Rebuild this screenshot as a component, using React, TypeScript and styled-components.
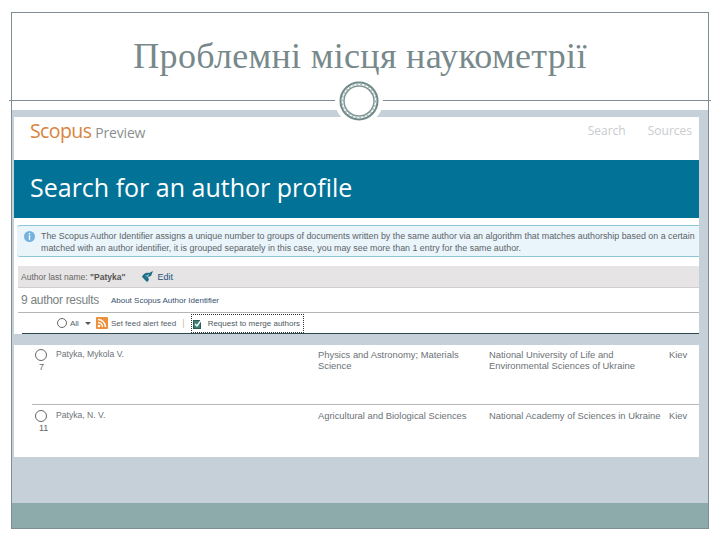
import styled, { createGlobalStyle } from 'styled-components';

const Global = createGlobalStyle`
  html, body { margin: 0; padding: 0; background: #ffffff; }
  body { width: 720px; height: 540px; overflow: hidden; font-family: "Liberation Sans", Arial, sans-serif; }
`;

const results = [
  {
    index: '7',
    name: 'Patyka, Mykola V.',
    subject: ['Physics and Astronomy; Materials', 'Science'],
    affiliation: ['National University of Life and', 'Environmental Sciences of Ukraine'],
    city: 'Kiev',
  },
  {
    index: '11',
    name: 'Patyka, N. V.',
    subject: ['Agricultural and Biological Sciences'],
    affiliation: ['National Academy of Sciences in Ukraine'],
    city: 'Kiev',
  },
];

function Ornament() {
  return (
    <svg width="48" height="48" viewBox="0 0 48 48" aria-hidden="true">
      <circle cx="24" cy="24" r="24" fill="#ffffff" />
      <circle cx="24" cy="24" r="18.5" fill="#ffffff" stroke="#6f8a88" strokeWidth="2" />
      <circle cx="24" cy="24" r="15" fill="#ffffff" stroke="#7f9794" strokeWidth="1.5" />
      <circle cx="24" cy="24" r="16.8" fill="none" stroke="#a9bcba" strokeWidth="1.5" strokeDasharray="2 2" />
    </svg>
  );
}

function InfoIcon() {
  return (
    <svg width="11" height="11" viewBox="0 0 11 11" aria-hidden="true">
      <circle cx="5.5" cy="5.5" r="5.5" fill="#74b4dc" />
      <rect x="4.8" y="2" width="1.4" height="1.4" fill="#ffffff" />
      <rect x="4.8" y="4.2" width="1.4" height="4.6" fill="#ffffff" />
    </svg>
  );
}

function EditIcon() {
  return (
    <svg width="12" height="11" viewBox="0 0 12 11" aria-hidden="true">
      <path d="M1 6c1-3 4-5 7-4l4-2-2 5-3 1 1 3-2 2C4 9 3 8 1 6z" fill="#1f6f86" />
      <path d="M4 5l4-2-1 3z" fill="#7cc0d2" />
    </svg>
  );
}

function RssIcon() {
  return (
    <svg width="12" height="12" viewBox="0 0 12 12" aria-hidden="true">
      <rect width="12" height="12" rx="1" fill="#ee8f3c" />
      <circle cx="3" cy="9" r="1.3" fill="#ffffff" />
      <path d="M2 5.5A4.5 4.5 0 0 1 6.5 10M2 2.5A7.5 7.5 0 0 1 9.5 10" fill="none" stroke="#ffffff" strokeWidth="1.4" />
    </svg>
  );
}

function MergeIcon() {
  return (
    <svg width="10" height="11" viewBox="0 0 10 11" aria-hidden="true">
      <rect x="0.5" y="2.5" width="7" height="8" fill="#3f7f74" stroke="#2c5e58" />
      <path d="M2 6l2 2 5-7" fill="none" stroke="#ffffff" strokeWidth="1.4" />
    </svg>
  );
}

export default function App() {
  return (
    <>
      <Global />
      <Page>
        <Slide>
          <TitleArea>
            <Title>Проблемні місця наукометрії</Title>
            <OrnamentHolder>
              <Ornament />
            </OrnamentHolder>
          </TitleArea>
          <Canvas>
            <Shot>
              <TopBar>
                <Logo>
                  <LogoMark>Scopus</LogoMark>
                  <LogoSub>Preview</LogoSub>
                </Logo>
                <TopNav>
                  <span>Search</span>
                  <span>Sources</span>
                </TopNav>
              </TopBar>
              <Hero>Search for an author profile</Hero>
              <Notice>
                <InfoIcon />
                <NoticeText>
                  <div>The Scopus Author Identifier assigns a unique number to groups of documents written by the same author via an algorithm that matches authorship based on a certain</div>
                  <div>matched with an author identifier, it is grouped separately in this case, you may see more than 1 entry for the same author.</div>
                </NoticeText>
              </Notice>
              <QueryBar>
                <QueryLabel>
                  Author last name: <b>"Patyka"</b>
                </QueryLabel>
                <EditIcon />
                <EditLink>Edit</EditLink>
              </QueryBar>
              <CountRow>
                <Count>9 author results</Count>
                <AboutLink>About Scopus Author Identifier</AboutLink>
              </CountRow>
              <Toolbar>
                <Radio $size={8} />
                <SmallText>All</SmallText>
                <Caret />
                <RssIcon />
                <SmallText>Set feed alert feed</SmallText>
                <Divider>|</Divider>
                <MergeButton>
                  <MergeIcon />
                  Request to merge authors
                </MergeButton>
              </Toolbar>
            </Shot>
            <Band />
            <ResultsPanel>
              {results.map((r, i) => (
                <ResultRow key={r.name} $last={i === results.length - 1}>
                  <Picker>
                    <Radio $size={10} />
                    <RowIndex>{r.index}</RowIndex>
                  </Picker>
                  <NameCell>{r.name}</NameCell>
                  <Cell $w={171}>
                    {r.subject.map((line) => (
                      <div key={line}>{line}</div>
                    ))}
                  </Cell>
                  <Cell $w={180}>
                    {r.affiliation.map((line) => (
                      <div key={line}>{line}</div>
                    ))}
                  </Cell>
                  <Cell $w={24}>{r.city}</Cell>
                </ResultRow>
              ))}
            </ResultsPanel>
          </Canvas>
          <Footer />
        </Slide>
      </Page>
    </>
  );
}

const Page = styled.div`
  width: 720px;
  height: 540px;
  padding: 12px 11px 11px 11px;
  box-sizing: border-box;
`;

const Slide = styled.div`
  width: 698px;
  height: 517px;
  box-sizing: border-box;
  border: 1px solid #7d8f90;
  display: flex;
  flex-direction: column;
  background: #ffffff;
`;

const TitleArea = styled.div`
  height: 97px;
  flex: none;
  position: relative;
  box-sizing: border-box;
  padding-top: 22px;
  margin: 0 -3px;
  background: linear-gradient(#7d8f90, #7d8f90) left 87px / 100% 1px no-repeat;
`;

const Title = styled.h1`
  margin: 0;
  font: 400 36px/42px "Liberation Serif", "Times New Roman", serif;
  color: #77898b;
  text-align: center;
  letter-spacing: 0.3px;
`;

const OrnamentHolder = styled.div`
  position: absolute;
  left: 326px;
  top: 64px;
  width: 48px;
  height: 48px;
`;

const Canvas = styled.div`
  flex: 1;
  background: #c5d0d8;
  padding: 7px 9px 46px 2px;
  display: flex;
  flex-direction: column;
`;

const Shot = styled.div`
  background: #ffffff;
  flex: none;
`;

const TopBar = styled.div`
  height: 43px;
  display: flex;
  align-items: flex-start;
  justify-content: space-between;
  padding: 3px 7px 0 16px;
  box-sizing: border-box;
`;

const Logo = styled.div`
  display: flex;
  align-items: baseline;
  gap: 4px;
`;

const LogoMark = styled.span`
  font: 400 19.5px/22px "Open Sans", sans-serif;
  color: #d9833d;
  letter-spacing: -0.6px;
`;

const LogoSub = styled.span`
  font: 400 14px/22px "Open Sans", sans-serif;
  color: #8a8f90;
  letter-spacing: -0.2px;
`;

const TopNav = styled.nav`
  display: flex;
  gap: 22px;
  padding-top: 3px;
  font: 400 12px/16px "Open Sans", sans-serif;
  color: #c9cccd;
`;

const Hero = styled.div`
  height: 58px;
  background: #037297;
  color: #ffffff;
  font: 400 25px/54px "Open Sans", sans-serif;
  padding-left: 16px;
`;

const Notice = styled.div`
  margin: 7px 0 9px 3px;
  height: 32px;
  box-sizing: border-box;
  background: #eaf4fb;
  border-top: 1px solid #8cc6d6;
  border-bottom: 1px solid #8cc6d6;
  border-radius: 3px 0 0 3px;
  display: flex;
  gap: 6px;
  padding: 5px 0 0 7px;
`;

const NoticeText = styled.div`
  font-size: 8.9px;
  line-height: 11.5px;
  color: #5c6468;
  white-space: nowrap;
`;

const QueryBar = styled.div`
  height: 22px;
  background: #e6e4e4;
  border-bottom: 1px solid #cfcfcf;
  margin-left: 4px;
  box-sizing: border-box;
  display: flex;
  align-items: center;
  padding-left: 3px;
`;

const QueryLabel = styled.span`
  font-size: 8.5px;
  color: #666666;
  margin-right: 16px;
  b { color: #555555; }
`;

const EditLink = styled.span`
  font-size: 9px;
  color: #22527f;
  margin-left: 4px;
`;

const CountRow = styled.div`
  height: 25px;
  margin-left: 4px;
  border-bottom: 1px solid #b4b6b6;
  box-sizing: border-box;
  display: flex;
  align-items: center;
  gap: 12px;
  padding-left: 3px;
`;

const Count = styled.span`
  font-size: 12px;
  letter-spacing: -0.3px;
  color: #7b7f80;
`;

const AboutLink = styled.span`
  font-size: 8px;
  color: #39506e;
`;

const Toolbar = styled.div`
  height: 21px;
  margin-left: 8px;
  border-bottom: 1px solid #2f4a52;
  box-sizing: border-box;
  display: flex;
  align-items: center;
  gap: 3px;
  padding-left: 35px;
`;

const Radio = styled.span<{ $size: number }>`
  width: ${(p) => p.$size}px;
  height: ${(p) => p.$size}px;
  border-radius: 50%;
  border: 1px solid #666666;
  background: #ffffff;
  flex: none;
`;

const SmallText = styled.span`
  font-size: 8px;
  color: #556068;
`;

const Caret = styled.span`
  width: 0;
  height: 0;
  border: 3.5px solid transparent;
  border-top: 3.5px solid #555555;
  border-bottom: 0;
  margin: 0 2px 0 3px;
`;

const Divider = styled.span`
  font-size: 9px;
  color: #d5b98a;
  margin: 0 3px;
`;

const MergeButton = styled.span`
  display: flex;
  align-items: center;
  gap: 5px;
  height: 17px;
  padding: 0 3px 0 1px;
  border: 1px dotted #333333;
  font-size: 8px;
  color: #4b5a60;
`;

const Band = styled.div`
  height: 11px;
  flex: none;
`;

const ResultsPanel = styled.div`
  flex: 1;
  background: #ffffff;
  padding-left: 18px;
`;

const ResultRow = styled.div<{ $last: boolean }>`
  height: ${(p) => (p.$last ? 52 : 60)}px;
  display: flex;
  box-sizing: border-box;
  padding-top: ${(p) => (p.$last ? 5 : 4)}px;
  border-bottom: ${(p) => (p.$last ? 'none' : '1px solid #b4b8b8')};
`;

const Picker = styled.div`
  width: 24px;
  flex: none;
  display: flex;
  flex-direction: column;
  align-items: flex-start;
  gap: 1px;
  padding-left: 3px;
  box-sizing: border-box;
`;

const RowIndex = styled.span`
  font-size: 9px;
  line-height: 10px;
  padding-left: 4px;
  color: #666666;
`;

const Cell = styled.div<{ $w: number }>`
  width: ${(p) => p.$w}px;
  flex: none;
  font-size: 9.4px;
  line-height: 11px;
  color: #6c7276;
  white-space: nowrap;
`;

const NameCell = styled.div`
  width: 262px;
  flex: none;
  font-size: 8.6px;
  line-height: 11px;
  color: #6c7276;
  white-space: nowrap;
`;

const Footer = styled.div`
  height: 25px;
  flex: none;
  background: #8dabab;
`;
